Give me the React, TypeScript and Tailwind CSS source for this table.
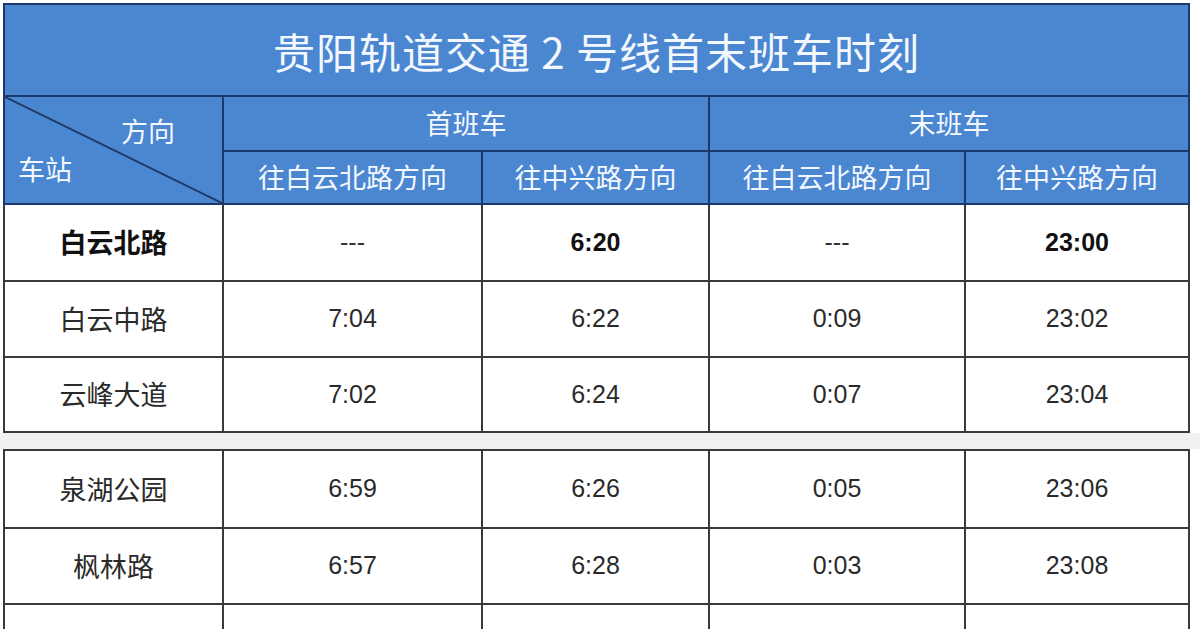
const cjk = "font-['Noto_Sans_CJK_SC',sans-serif]";
const num = "font-['Liberation_Sans','Noto_Sans_CJK_SC',sans-serif]";

type Row = { name: string; t: [string, string, string, string]; bold?: boolean };

const top: Row[] = [
  { name: "白云北路", t: ["---", "6:20", "---", "23:00"], bold: true },
  { name: "白云中路", t: ["7:04", "6:22", "0:09", "23:02"] },
  { name: "云峰大道", t: ["7:02", "6:24", "0:07", "23:04"] },
];

const bottom: Row[] = [
  { name: "泉湖公园", t: ["6:59", "6:26", "0:05", "23:06"] },
  { name: "枫林路", t: ["6:57", "6:28", "0:03", "23:08"] },
  { name: "贵阳北站", t: ["6:55", "6:30", "0:01", "23:10"] },
];

function Cols() {
  return (
    <colgroup>
      <col className="w-[219px]" />
      <col className="w-[259px]" />
      <col className="w-[227px]" />
      <col className="w-[256px]" />
      <col className="w-[224px]" />
    </colgroup>
  );
}

function BodyRow({ row, h }: { row: Row; h: string }) {
  const weight = row.bold ? "font-bold text-[#111]" : "font-normal text-[#2a2a2a]";
  return (
    <tr className={h}>
      <td className={`border-2 border-[#3a3a3a] text-center text-[27px] ${cjk} ${weight}`}>{row.name}</td>
      {row.t.map((v, i) => (
        <td
          key={i}
          className={`border-2 border-[#3a3a3a] text-center text-[25px] ${num} ${
            v === "---" ? "font-normal text-[#333]" : weight
          }`}
        >
          {v}
        </td>
      ))}
    </tr>
  );
}

export default function App() {
  return (
    <div className="h-[629px] w-[1200px] overflow-hidden bg-white">
      <div className="pl-[3px] pt-[3px]">
        <table className="w-[1185px] table-fixed border-collapse">
          <Cols />
          <thead className="bg-[#4b86d1] text-[#f3f8ff]">
            <tr className="h-[92px]">
              <th
                colSpan={5}
                className={`border-2 border-[#1b3a6b] text-center text-[42px] font-normal tracking-[1px] ${cjk}`}
              >
                贵阳轨道交通 2 号线首末班车时刻
              </th>
            </tr>
            <tr className="h-[55px]">
              <th rowSpan={2} className="relative border-2 border-[#1b3a6b] p-0 align-top font-normal">
                <svg className="absolute inset-0 h-full w-full" preserveAspectRatio="none" viewBox="0 0 100 100">
                  <line x1="0" y1="0" x2="100" y2="100" stroke="#1b3a6b" strokeWidth="2" vectorEffect="non-scaling-stroke" />
                </svg>
                <div className={`relative flex flex-col text-[27px] ${cjk}`}>
                  <span className="self-end pr-[47px] pt-[14px] leading-[40px]">方向</span>
                  <span className="-mt-[2px] self-start pl-[13px] leading-[40px]">车站</span>
                </div>
              </th>
              <th colSpan={2} className={`border-2 border-[#1b3a6b] text-center text-[27px] font-normal ${cjk}`}>
                首班车
              </th>
              <th colSpan={2} className={`border-2 border-[#1b3a6b] text-center text-[27px] font-normal ${cjk}`}>
                末班车
              </th>
            </tr>
            <tr className="h-[53px]">
              {["往白云北路方向", "往中兴路方向", "往白云北路方向", "往中兴路方向"].map((s, i) => (
                <th key={i} className={`border-2 border-[#1b3a6b] text-center text-[27px] font-normal ${cjk}`}>
                  {s}
                </th>
              ))}
            </tr>
          </thead>
          <tbody>
            <BodyRow row={top[0]} h="h-[77px]" />
            <BodyRow row={top[1]} h="h-[76px]" />
            <BodyRow row={top[2]} h="h-[75px]" />
          </tbody>
        </table>
      </div>
      <div className="h-[16px] w-full bg-[#f1f1f1]" />
      <div className="pl-[3px]">
        <table className="w-[1185px] table-fixed border-collapse">
          <Cols />
          <tbody>
            <BodyRow row={bottom[0]} h="h-[78px]" />
            <BodyRow row={bottom[1]} h="h-[76px]" />
            <BodyRow row={bottom[2]} h="h-[76px]" />
          </tbody>
        </table>
      </div>
    </div>
  );
}
